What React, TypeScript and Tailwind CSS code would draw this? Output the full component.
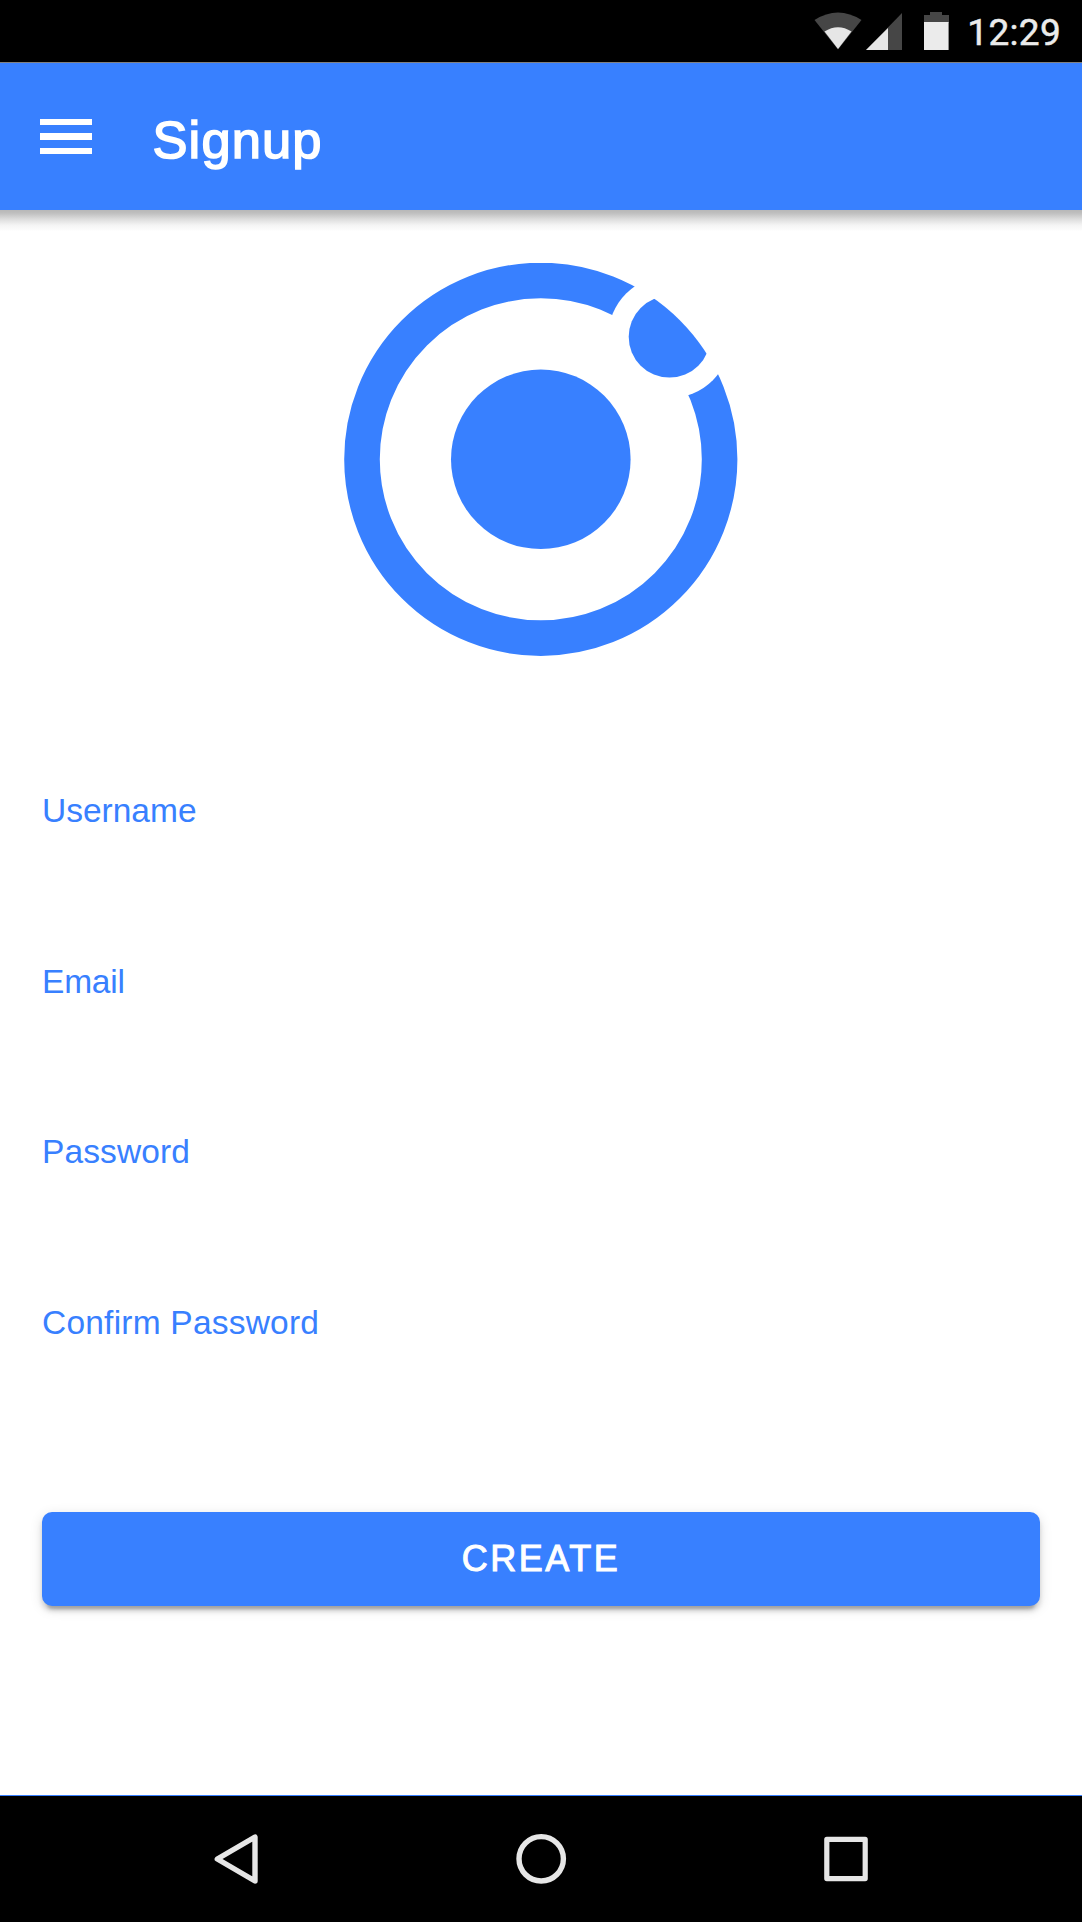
const FIELDS = [
  { name: "Username", tracking: "tracking-normal" },
  { name: "Email", tracking: "tracking-[-0.2px]" },
  { name: "Password", tracking: "tracking-[0.1px]" },
  { name: "Confirm Password", tracking: "tracking-[0.22px]" },
];

function StatusBar() {
  return (
    <div className="flex h-[63px] shrink-0 justify-end border-b border-[#808080] bg-black pr-[21px]">
      <svg className="h-[62px] w-[142px]" viewBox="812 0 142 62">
        <path d="M814.5 20Q838 5 861.5 20L838 49.5Z" fill="#464646" />
        <path d="M824.5 31.5Q838 23 851.5 31.5L838 49Z" fill="#e6e6e6" />
        <path d="M902 13V50H866Z" fill="#464646" />
        <path d="M888 28V50H866Z" fill="#e6e6e6" />
        <path d="M930 12H942V15H949V23H924V15H930Z" fill="#464646" />
        <path d="M924 22H948.6V50H924Z" fill="#ebebeb" />
      </svg>
      <time className="ml-[13px] mt-[12px] whitespace-nowrap font-['Roboto'] text-[37px] leading-[42px] tracking-[0.3px] text-[#ebebeb] [-webkit-text-stroke:0.5px_#ebebeb]">
        12:29
      </time>
    </div>
  );
}

function Header() {
  return (
    <div className="relative shrink-0">
      <header className="flex h-[147px] items-center bg-[#3880ff] pl-[40px]">
        <button aria-label="Menu" className="flex w-[51.5px] flex-col gap-[8px]">
          <span className="h-[6.2px] bg-white" />
          <span className="h-[6.2px] bg-white" />
          <span className="h-[6.2px] bg-white" />
        </button>
        <h1 className="ml-[61px] mt-[7px] text-[52.5px] leading-[60px] tracking-[1.1px] text-white [-webkit-text-stroke:1.6px_white]">
          Signup
        </h1>
      </header>
      <div className="absolute left-0 top-full h-[21px] w-full bg-[linear-gradient(#b8b8b8_0%,#bebebe_14%,#dcdcdc_43%,#f4f4f4_72%,#fcfcfc_95%,#ffffff_100%)]" />
    </div>
  );
}

function Logo() {
  return (
    <svg className="mt-[53px] h-[393px] w-full shrink-0" viewBox="0 263 1082 393">
      <defs>
        <mask id="gap">
          <rect x="340" y="260" width="402" height="400" fill="white" />
          <circle cx="669.5" cy="336.8" r="61.3" fill="black" />
        </mask>
        <clipPath id="orbit">
          <circle cx="540.8" cy="459.3" r="196.6" />
        </clipPath>
      </defs>
      <circle cx="540.8" cy="459.3" r="178.8" fill="none" stroke="#3880ff" strokeWidth="35.6" mask="url(#gap)" />
      <circle cx="540.8" cy="459.3" r="89.8" fill="#3880ff" />
      <circle cx="669.5" cy="336.8" r="40.8" fill="#3880ff" clipPath="url(#orbit)" />
    </svg>
  );
}

function NavBar() {
  return (
    <nav className="flex h-[127px] shrink-0 items-center justify-between border-t border-[#3880ff] bg-black pl-[206px] pr-[206px]">
      <svg className="h-[60px] w-[60px]" viewBox="206 1829 60 60" fill="none" stroke="#e6e6e6" strokeWidth="5.4" strokeLinejoin="round">
        <path d="M217.3 1859L255 1837V1881Z" />
      </svg>
      <svg className="h-[60px] w-[60px]" viewBox="511 1829 60 60" fill="none" stroke="#e6e6e6" strokeWidth="5.4">
        <circle cx="541.2" cy="1858.8" r="22.2" />
      </svg>
      <svg className="h-[60px] w-[60px]" viewBox="816 1829 60 60" fill="none" stroke="#e6e6e6" strokeWidth="5.2" strokeLinejoin="round">
        <path d="M826.8 1839.4H865.2V1878.6H826.8Z" />
      </svg>
    </nav>
  );
}

export default function App() {
  return (
    <div className="flex h-[1922px] w-[1082px] flex-col overflow-hidden bg-white font-['Liberation_Sans',Arial,sans-serif]">
      <StatusBar />
      <Header />
      <main className="flex grow flex-col">
        <Logo />
        <form className="mt-[135px] flex flex-col px-[42px]">
          {FIELDS.map(({ name, tracking }) => (
            <label key={name} className={`h-[170.6px] text-[33.5px] leading-[40px] text-[#3880ff] ${tracking}`}>
              {name}
            </label>
          ))}
          <button
            type="button"
            className="mt-[38.6px] h-[94.4px] rounded-[10px] bg-[#3880ff] text-[36px] tracking-[2.5px] text-white shadow-[0_8px_3px_-5px_rgba(0,0,0,0.2),0_5px_5px_0_rgba(0,0,0,0.14),0_3px_13px_0_rgba(0,0,0,0.12)] [-webkit-text-stroke:1px_white]"
          >
            CREATE
          </button>
        </form>
      </main>
      <NavBar />
    </div>
  );
}
